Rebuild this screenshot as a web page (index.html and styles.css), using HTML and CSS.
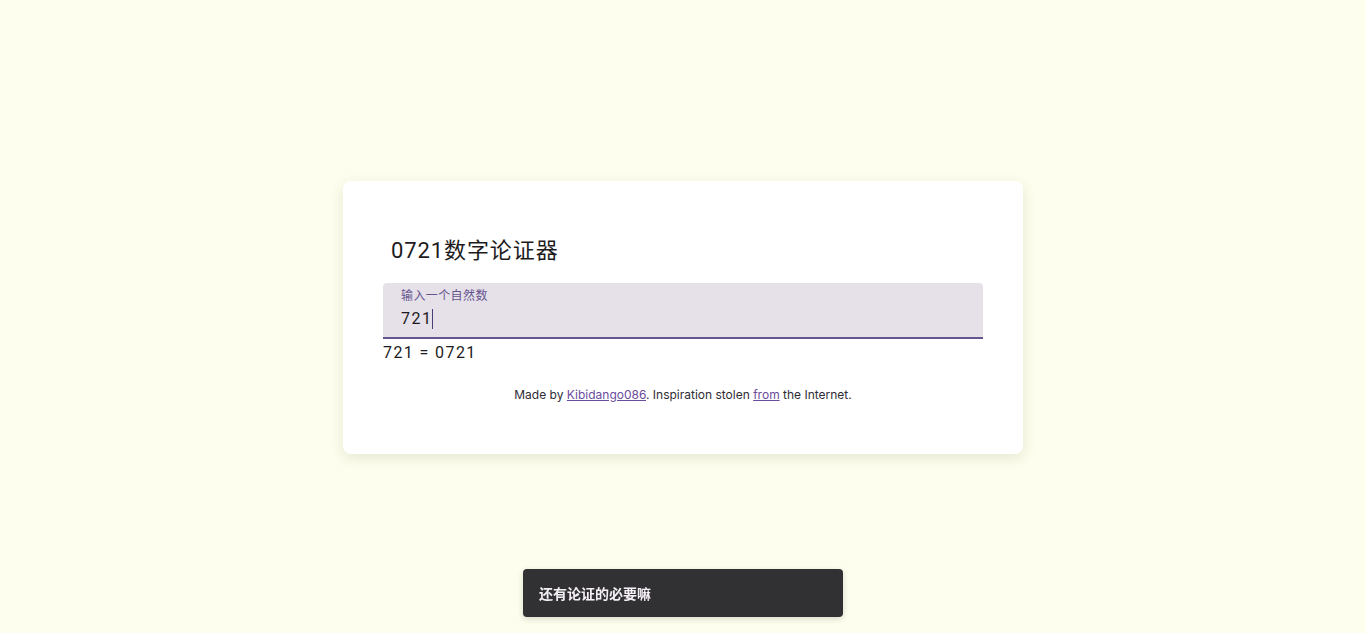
FILE: index.html
```html
<!DOCTYPE html>
<html lang="zh">
<head>
<meta charset="utf-8">
<title>0721数字论证器</title>
<link rel="stylesheet" href="styles.css">
</head>
<body>
<main class="page">
  <section class="card">
    <h1 class="title">0721数字论证器</h1>
    <div class="field">
      <span class="field-label">输入一个自然数</span>
      <div class="field-value">721<span class="caret"></span></div>
    </div>
    <p class="result">721 = 0721</p>
    <p class="footer">Made by <a href="#">Kibidango086</a>. Inspiration stolen <a href="#">from</a> the Internet.</p>
  </section>
</main>
<div class="snackbar">还有论证的必要嘛</div>
</body>
</html>
```
FILE: styles.css
```css
html, body {
  margin: 0;
  padding: 0;
}
body {
  background: #fefeee;
  font-family: Roboto, "Noto Sans CJK SC", sans-serif;
  color: #1d1b20;
}
.page {
  min-height: 100vh;
  box-sizing: border-box;
  padding-top: 2px;
  display: flex;
  align-items: center;
  justify-content: center;
}
.card {
  width: 600px;
  padding: 40px;
  background: #ffffff;
  border-radius: 8px;
  box-shadow: 0 4px 14px rgba(60, 60, 30, 0.12);
  box-sizing: content-box;
}
.title {
  margin: 16px 0 18px 8px;
  font-size: 22px;
  line-height: 28px;
  font-weight: 400;
  letter-spacing: 0.9px;
  color: #1d1b20;
}
.field {
  background: #e6e0e9;
  border-radius: 4px 4px 0 0;
  border-bottom: 2px solid #65558f;
  padding: 5px 16px 0 18px;
  display: flex;
  flex-direction: column;
  box-sizing: content-box;
  height: 49px;
}
.field-label {
  font-size: 12px;
  line-height: 16px;
  letter-spacing: 0.4px;
  color: #65558f;
}
.field-value {
  font-size: 16px;
  line-height: 24px;
  letter-spacing: 1.5px;
  color: #1d1b20;
  margin-top: 3px;
  display: flex;
  align-items: center;
}
.caret {
  display: inline-block;
  width: 1px;
  height: 20px;
  background: #4a3d78;
  margin-left: 0;
}
.result {
  margin: 2px 0 0;
  font-size: 16px;
  line-height: 24px;
  letter-spacing: 1.4px;
  color: #1d1b20;
}
.footer {
  margin: 20px 0 9px;
  text-align: center;
  font-family: Inter, "Noto Sans", sans-serif;
  font-size: 12px;
  line-height: 20px;
  color: #2f2c36;
}
.footer a {
  color: #6a4c9c;
  text-decoration: underline;
}
.snackbar {
  position: fixed;
  left: 50%;
  bottom: 16px;
  transform: translateX(-50%);
  width: 320px;
  height: 48px;
  box-sizing: border-box;
  padding: 0 16px;
  display: flex;
  align-items: center;
  background: #313033;
  color: #f4eff4;
  border-radius: 4px;
  font-size: 14px;
  font-weight: 700;
  box-shadow: 0 2px 6px rgba(0, 0, 0, 0.15);
}
```
